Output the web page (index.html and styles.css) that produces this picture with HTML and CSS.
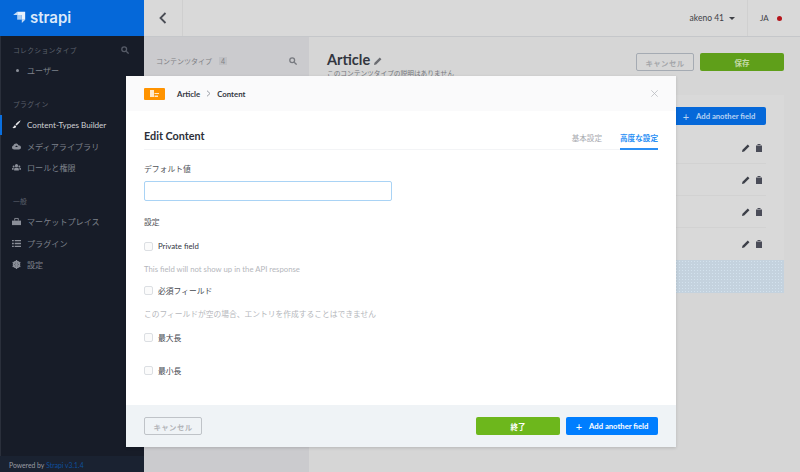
FILE: index.html
```html
<!DOCTYPE html>
<html lang="ja">
<head>
    <meta charset="UTF-8">
    <title>Strapi</title>
    <link rel="stylesheet" href="styles.css">
</head>
<body>

<div class="app">
    <!-- left menu -->
    <aside class="sidebar">
        <div class="brand">
            <svg class="brand-icon" width="13" height="12" viewBox="0 0 19 18">
                <path d="M6 1h12v12h-5V6H6z" fill="#e9f2fc"/>
                <path d="M6 6h7v7H6z" fill="#a9cdf3"/>
                <path d="M13 13h5l-5 5z" fill="#c3dcf6"/>
                <path d="M6 1v5H0z" fill="#c3dcf6"/>
            </svg>
            <span class="brand-name">strapi</span>
        </div>
        <nav class="menu">
            <div class="menu-title">
                <span>コレクションタイプ</span>
                <svg width="8" height="8" viewBox="0 0 10 10" fill="none" stroke="#565b67" stroke-width="1.6"><circle cx="4" cy="4" r="3"/><path d="M6.5 6.5L9.5 9.5"/></svg>
            </div>
            <a class="menu-item"><span class="bullet"></span>ユーザー</a>

            <div class="menu-title">プラグイン</div>
            <a class="menu-item active">
                <svg class="menu-icon" viewBox="0 0 10 10" fill="#e8e8ea"><path d="M9.6.4C8 1 5 3.4 3.9 5.1l1.2 1.1C6.9 4.9 9.2 2 9.6.4zM3.3 5.7C1.8 5.9 2 8 .4 8.6c1.5.9 4 .6 4.2-1.7z"/></svg>
                Content-Types Builder
            </a>
            <a class="menu-item">
                <svg class="menu-icon" viewBox="0 0 10 10" fill="#8b8f99"><path d="M2.4 8.2C1 8.2 0 7.2 0 6c0-1 .7-1.8 1.6-2C1.9 2.600 3.200 1.700 4.500 1.700c1.200 0 2.200.7 2.600 1.800C8.700 3.500 10 4.500 10 6c0 1.300-1 2.200-2.400 2.200z"/><path d="M5 3.800L3.400 5.600h3.200z" fill="#171c28"/></svg>
                メディアライブラリ
            </a>
            <a class="menu-item">
                <svg class="menu-icon" viewBox="0 0 10 10" fill="#8b8f99"><circle cx="5" cy="3" r="1.800"/><circle cx="1.800" cy="3.800" r="1.100"/><circle cx="8.200" cy="3.800" r="1.100"/><path d="M2.400 8.400V6.800C2.400 5.800 3.400 5.300 5 5.300s2.600.5 2.600 1.500v1.600zM0 7.400V6.200c0-.6.600-1 1.800-1v2.200zM10 7.400V6.200c0-.6-.6-1-1.800-1v2.200z"/></svg>
                ロールと権限
            </a>

            <div class="menu-title">一般</div>
            <a class="menu-item">
                <svg class="menu-icon" viewBox="0 0 10 10" fill="#8b8f99"><path d="M0 4h10v5H0z"/><path d="M3 4V1.600h4V4" fill="none" stroke="#8b8f99"/></svg>
                マーケットプレイス
            </a>
            <a class="menu-item">
                <svg class="menu-icon" viewBox="0 0 10 10" fill="#8b8f99"><path d="M0 1h2v1.600H0zM3 1h7v1.600H3zM0 4.200h2v1.600H0zM3 4.200h7v1.600H3zM0 7.400h2V9H0zM3 7.400h7V9H3z"/></svg>
                プラグイン
            </a>
            <a class="menu-item">
                <svg class="menu-icon" viewBox="0 0 10 10"><circle cx="5" cy="5" r="3.200" fill="none" stroke="#8b8f99" stroke-width="2"/><path d="M5 0v10M.7 2.500l8.600 5M.7 7.500l8.600-5" stroke="#8b8f99" stroke-width="1.300"/></svg>
                設定
            </a>
        </nav>
        <div class="powered">Powered by <span class="powered-link">Strapi v3.1.4</span></div>
    </aside>

    <!-- page behind the popup -->
    <main class="main">
        <header class="topbar">
            <div class="back">
                <svg width="8" height="12" viewBox="0 0 8 12" fill="none" stroke="#4a4d55" stroke-width="1.800"><path d="M6.500 1L1.500 6l5 5"/></svg>
            </div>
            <div class="user">akeno 41<span class="caret"></span></div>
            <div class="lang">JA<span class="lang-dot"></span></div>
        </header>
        <div class="content">
            <section class="types">
                <div class="types-head">
                    <span>コンテンツタイプ</span><span class="types-count">4</span>
                    <svg class="types-search" width="8" height="8" viewBox="0 0 10 10" fill="none" stroke="#77797f" stroke-width="1.600"><circle cx="4" cy="4" r="3"/><path d="M6.500 6.500L9.500 9.500"/></svg>
                </div>
            </section>
            <section class="article">
                <div class="article-head">
                    <div class="article-info">
                        <h1>Article
                            <svg width="8" height="8" viewBox="0 0 10 10" fill="#6b6d72"><path d="M0 10l.6-2.700L7.200.7l2.100 2.100-6.600 6.600z"/></svg>
                        </h1>
                        <p>このコンテンツタイプの説明はありません</p>
                    </div>
                    <button class="btn btn-ghost">キャンセル</button>
                    <button class="btn btn-save">保存</button>
                </div>
                <div class="fields">
                    <div class="fields-top">
                        <button class="btn btn-add-back"><span class="plus">+</span>Add another field</button>
                    </div>
                    <div class="field-row">
                        <svg width="8" height="8" viewBox="0 0 10 10" fill="#3c3f48"><path d="M0 10l.6-2.700L7.200.7l2.100 2.100-6.600 6.600z"/></svg>
                        <svg width="6" height="8" viewBox="0 0 6 8" fill="#4a4c58"><path d="M0 1.500h6V8H0zM1.500 0h3v1H1.500z"/></svg>
                    </div>
                    <div class="field-row">
                        <svg width="8" height="8" viewBox="0 0 10 10" fill="#3c3f48"><path d="M0 10l.6-2.700L7.200.7l2.100 2.100-6.600 6.600z"/></svg>
                        <svg width="6" height="8" viewBox="0 0 6 8" fill="#4a4c58"><path d="M0 1.500h6V8H0zM1.500 0h3v1H1.500z"/></svg>
                    </div>
                    <div class="field-row">
                        <svg width="8" height="8" viewBox="0 0 10 10" fill="#3c3f48"><path d="M0 10l.6-2.700L7.200.7l2.100 2.100-6.600 6.600z"/></svg>
                        <svg width="6" height="8" viewBox="0 0 6 8" fill="#4a4c58"><path d="M0 1.500h6V8H0zM1.500 0h3v1H1.500z"/></svg>
                    </div>
                    <div class="field-row field-row-last">
                        <svg width="8" height="8" viewBox="0 0 10 10" fill="#3c3f48"><path d="M0 10l.6-2.700L7.200.7l2.100 2.100-6.600 6.600z"/></svg>
                        <svg width="6" height="8" viewBox="0 0 6 8" fill="#4a4c58"><path d="M0 1.500h6V8H0zM1.500 0h3v1H1.500z"/></svg>
                    </div>
                    <div class="fields-foot"></div>
                </div>
            </section>
        </div>
    </main>
</div>

<!-- popup -->
<div class="modal">
    <div class="modal-head">
        <span class="type-tag">
            <svg width="9" height="7" viewBox="0 0 9 7" fill="#fff" opacity="0.8"><path d="M0 0h4v7H0zM4.500 3H9v1H4.500zM4.500 5.500H8v1.500H4.500z"/></svg>
        </span>
        <span class="crumb">Article</span>
        <svg class="crumb-sep" width="5" height="7" viewBox="0 0 5 7" fill="none" stroke="#9b9ea6"><path d="M1 .7l3 2.800-3 2.800"/></svg>
        <span class="crumb">Content</span>
        <svg class="modal-close" width="7" height="7" viewBox="0 0 7 7" stroke="#b9bbc0" stroke-width="0.800"><path d="M.3.300l6.400 6.400M6.700.300L.3 6.700"/></svg>
    </div>
    <div class="modal-body">
        <div class="modal-title-row">
            <h2>Edit Content</h2>
            <div class="tabs">
                <span class="tab">基本設定</span>
                <span class="tab tab-active">高度な設定</span>
            </div>
        </div>
        <label class="label label-default">デフォルト値</label>
        <input class="text-input" type="text">
        <div class="label label-settings">設定</div>
        <div class="check check-first"><span class="box"></span><span class="check-dark">Private field</span></div>
        <p class="hint">This field will not show up in the API response</p>
        <div class="check"><span class="box"></span>必須フィールド</div>
        <p class="hint">このフィールドが空の場合、エントリを作成することはできません</p>
        <div class="check check-max"><span class="box"></span>最大長</div>
        <div class="check check-min"><span class="box"></span>最小長</div>
    </div>
    <div class="modal-foot">
        <button class="btn btn-cancel">キャンセル</button>
        <button class="btn btn-finish">終了</button>
        <button class="btn btn-add"><span class="plus">+</span>Add another field</button>
    </div>
</div>

</body>
</html>
```

FILE: styles.css
```css
* {
    box-sizing: border-box;
}
html, body {
    height: 100%;
}
body {
    margin: 0;
    overflow: hidden;
    font-family: 'Lato', 'Noto Sans CJK JP', sans-serif;
    font-size: 9px;
    background-color: #d6d6d6;
    color: #33363f;
}
h1, h2, p {
    margin: 0;
}
.app {
    display: flex;
    height: 472px;
}

/* sidebar */
.sidebar {
    width: 144px;
    flex-shrink: 0;
    display: flex;
    flex-direction: column;
    background-color: #171c28;
    border-left: 1px solid #2a2f3b;
}
.brand {
    height: 36px;
    margin-left: -1px;
    padding: 0 0 2px 13px;
    display: flex;
    align-items: center;
    gap: 4px;
    background-color: #0568d9;
}
.brand-name {
    font-family: 'Inter', sans-serif;
    font-size: 15px;
    font-weight: 600;
    color: #dbe9fa;
}
.menu {
    flex: 1;
    padding-top: 9px;
}
.menu-title {
    display: flex;
    align-items: center;
    justify-content: space-between;
    height: 10px;
    margin: 17px 15px 5px 12px;
    font-size: 6.800px;
    letter-spacing: 0.300px;
    color: #5b606c;
}
.menu-title:first-child {
    margin-top: 0;
}
.menu-item {
    position: relative;
    display: flex;
    align-items: center;
    height: 21.700px;
    padding-left: 26px;
    font-size: 8.100px;
    color: #7d818b;
}
.menu-item.active {
    color: #d0d1d4;
}
.menu-item.active::before {
    content: "";
    position: absolute;
    left: -1px;
    top: 1px;
    bottom: 0;
    width: 2px;
    background-color: #0a6fe0;
}
.menu-icon {
    width: 9px;
    height: 9px;
    margin-left: -15px;
    margin-right: 6px;
    flex-shrink: 0;
}
.bullet {
    width: 3px;
    height: 3px;
    margin-left: -11px;
    margin-right: 8px;
    border-radius: 50%;
    background-color: #8b8f99;
}
.powered {
    height: 16px;
    margin-left: -1px;
    padding: 1px 0 0 9px;
    display: flex;
    align-items: center;
    gap: 2px;
    font-size: 6.800px;
    color: #9a9da5;
    background-color: #1a2231;
}
.powered-link {
    color: #0e4f9c;
}

/* page behind */
.main {
    flex: 1;
    display: flex;
    flex-direction: column;
    min-width: 0;
}
.topbar {
    height: 37px;
    display: flex;
    align-items: center;
    border-bottom: 1px solid #c5c7ca;
    background-color: #d9d9d9;
}
.back {
    width: 39px;
    height: 100%;
    display: flex;
    align-items: center;
    justify-content: center;
    border-right: 1px solid #cfcfcf;
}
.user {
    margin-left: auto;
    height: 100%;
    display: flex;
    align-items: center;
    padding-right: 12px;
    font-size: 8.500px;
    color: #3f4147;
    border-right: 1px solid #d0d0d0;
}
.caret {
    margin-left: 5px;
    border-left: 3px solid transparent;
    border-right: 3px solid transparent;
    border-top: 3px solid #3f4147;
}
.lang {
    width: 52px;
    padding-left: 12px;
    display: flex;
    align-items: center;
    gap: 8px;
    font-size: 8px;
    color: #3f4147;
}
.lang-dot {
    width: 5px;
    height: 5px;
    border-radius: 50%;
    background-color: #b5141b;
}
.content {
    flex: 1;
    display: flex;
}
.types {
    width: 165px;
    padding: 19px 12px 0;
    background-color: #cbcbce;
}
.types-head {
    display: flex;
    align-items: center;
    gap: 7px;
    font-size: 7px;
    color: #808185;
}
.types-count {
    padding: 0 2px;
    font-size: 7px;
    background-color: #bfc0c4;
}
.types-search {
    margin-left: auto;
}
.article {
    flex: 1;
    padding: 12px 16px 0 18px;
}
.article-head {
    display: flex;
    align-items: flex-start;
    gap: 6px;
}
.article-info {
    flex: 1;
    margin-top: 1px;
}
.article h1 {
    font-size: 14.500px;
    line-height: 20px;
    font-weight: 700;
    color: #33363f;
}
.article p {
    font-size: 6.700px;
    line-height: 10px;
    margin-top: -2px;
    color: #75777d;
}
.article-head .btn {
    margin-top: 4px;
}
.fields {
    margin-top: 17px;
    background-color: #d9d9d9;
}
.fields-top {
    height: 37px;
    padding: 12px 18px 0;
    display: flex;
    justify-content: flex-end;
}
.field-row {
    height: 32px;
    margin-right: 18px;
    padding-right: 4px;
    display: flex;
    align-items: center;
    justify-content: flex-end;
    gap: 6px;
    border-bottom: 1px solid #d2d2d2;
}
.field-row-last {
    border-bottom: 0;
}
.fields-foot {
    height: 33px;
    background-color: #c4d2de;
    background-image: radial-gradient(#d3e2ee 1px, transparent 1px);
    background-size: 3px 3px;
}

/* buttons */
.btn {
    height: 18px;
    padding: 0;
    display: inline-flex;
    align-items: center;
    justify-content: center;
    border: 0;
    border-radius: 2px;
    font-family: inherit;
    font-size: 7.700px;
    font-weight: 700;
    color: #fff;
}
.btn-ghost {
    width: 58px;
    background: transparent;
    border: 1px solid #a5abb3;
    font-size: 7.400px;
    letter-spacing: 0.400px;
    color: #a4a6aa;
}
.btn-save {
    width: 84px;
    font-size: 7.500px;
    background-color: #5f9f1a;
    color: #c5dba9;
}
.btn-add-back {
    width: 94px;
    background-color: #0568d9;
    color: #b7d3f3;
}
.plus {
    margin-right: 7px;
    font-size: 11px;
    font-weight: 400;
    line-height: 1;
}

/* popup */
.modal {
    position: absolute;
    left: 126px;
    top: 76px;
    width: 550px;
    height: 371px;
    display: flex;
    flex-direction: column;
    background-color: #fff;
    box-shadow: 0 1px 3px rgba(0, 0, 0, 0.15);
}
.modal-head {
    height: 35px;
    padding: 0 18px;
    display: flex;
    align-items: center;
    background-color: #fafafb;
}
.type-tag {
    width: 21px;
    height: 12px;
    margin-right: 12px;
    display: flex;
    align-items: center;
    justify-content: center;
    border-radius: 1px;
    background-color: #ff9300;
}
.crumb {
    font-size: 7.800px;
    font-weight: 700;
    color: #33363f;
}
.crumb-sep {
    margin: 0 6px;
}
.modal-close {
    margin-left: auto;
}
.modal-body {
    flex: 1;
    padding: 0 18px;
}
.modal-title-row {
    height: 39px;
    display: flex;
    align-items: flex-end;
    justify-content: space-between;
    border-bottom: 1px solid #f3f4f6;
}
.modal-title-row h2 {
    font-size: 10.800px;
    line-height: 14px;
    margin-bottom: 6px;
    font-weight: 700;
    color: #2c2f38;
}
.tabs {
    display: flex;
    gap: 18px;
}
.tab {
    height: 16px;
    font-size: 7.600px;
    line-height: 10px;
    color: #a8aaaf;
}
.tab-active {
    margin-bottom: -1px;
    height: 17px;
    font-weight: 700;
    color: #2a8ff5;
    border-bottom: 2px solid #2a8ff5;
}
.label {
    display: block;
    font-size: 7.800px;
    line-height: 12px;
    color: #4f5258;
}
.label-default {
    margin-top: 13px;
}
.text-input {
    display: block;
    width: 248px;
    height: 20px;
    margin-top: 6px;
    padding: 0 8px;
    border: 1px solid #a9d3f5;
    border-radius: 2px;
    background-color: #fff;
    outline: none;
}
.label-settings {
    margin-top: 15px;
}
.check {
    display: flex;
    align-items: center;
    height: 12px;
    font-size: 7.800px;
    color: #45484f;
}
.check-dark {
    color: #33363f;
}
.check-first {
    margin-top: 12px;
}
.check-max {
    margin-top: 11.500px;
}
.check-min {
    margin-top: 21px;
}
.box {
    width: 9px;
    height: 9px;
    margin-right: 5px;
    border: 1px solid #dcdfe3;
    border-radius: 2px;
    background-color: #fbfbfb;
}
.hint {
    margin: 11px 0 9.500px;
    font-size: 7.750px;
    line-height: 12px;
    color: #b5b7bc;
}
.modal-foot {
    height: 42px;
    padding: 0 18px;
    display: flex;
    align-items: center;
    gap: 6px;
    background-color: #eff3f6;
}
.btn-cancel {
    width: 58px;
    margin-right: auto;
    background: transparent;
    border: 1px solid #bfc3c8;
    font-size: 7.400px;
    letter-spacing: 0.400px;
    color: #b3b5b9;
}
.btn-finish {
    width: 84px;
    font-size: 7.500px;
    background-color: #6db71c;
}
.btn-add {
    width: 92px;
    background-color: #007eff;
}
```
